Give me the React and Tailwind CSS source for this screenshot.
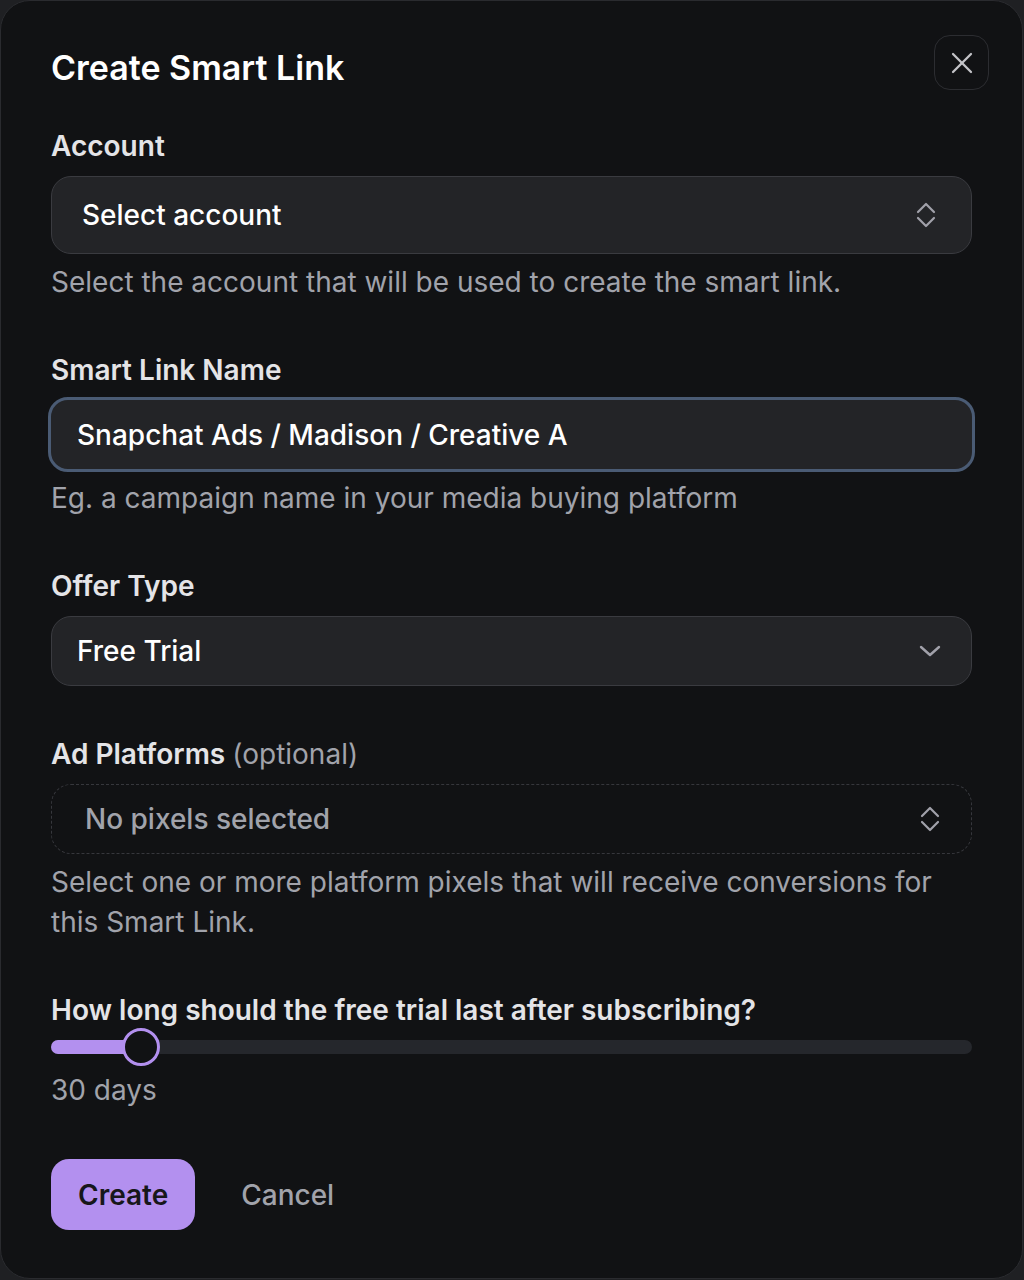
import { X } from "lucide-react";

const Label = ({ children }) => (
  <div className="text-[28px] font-semibold leading-[32px] text-[#e4e4e7]">{children}</div>
);

const Help = ({ children }) => (
  <p className="text-[28px] leading-[40px] text-[#a1a3ab]">{children}</p>
);

const UpDown = () => (
  <svg width="20" height="26" viewBox="0 0 20 26" fill="none" stroke="#a1a1aa" strokeWidth="2.2" strokeLinecap="round" strokeLinejoin="round">
    <path d="M2 10 L10 2 L18 10" />
    <path d="M2 16 L10 24 L18 16" />
  </svg>
);

const Down = () => (
  <svg width="22" height="12" viewBox="0 0 22 12" fill="none" stroke="#a1a1aa" strokeWidth="2.4" strokeLinecap="round" strokeLinejoin="round">
    <path d="M2 2 L11 10 L20 2" />
  </svg>
);

export default function App() {
  return (
    <div
      className="h-[1280px] w-[1024px] bg-[#1f2023]"
      style={{ fontFamily: "Inter, 'Noto Sans', sans-serif" }}
    >
      <div className="h-[1279px] w-[1023px] rounded-[30px] border border-[#2a2b2f] bg-[#111214] px-[50px] pt-[34px]">
        <div className="flex items-start justify-between">
          <h1 className="pt-[12px] text-[34px] font-semibold leading-[42px] text-white">Create Smart Link</h1>
          <button className="-mr-[17px] flex h-[55px] w-[55px] items-center justify-center rounded-[16px] border border-[#2c2d31] text-[#c4c4c8]">
            <X size={36} strokeWidth={1.5} />
          </button>
        </div>

        <div className="mt-[40px]">
          <Label>Account</Label>
          <div className="mt-[14px] flex h-[78px] items-center justify-between rounded-[20px] border border-[#3a3b40] bg-[#232427] pl-[30px] pr-[35px]">
            <span className="text-[28px] font-medium text-white">Select account</span>
            <UpDown />
          </div>
          <div className="mt-[8px]">
            <Help>Select the account that will be used to create the smart link.</Help>
          </div>
        </div>

        <div className="mt-[52px]">
          <Label>Smart Link Name</Label>
          <div className="-mx-[3px] mt-[11px] flex h-[75px] items-center rounded-[20px] border-[3px] border-[#4a5b74] bg-[#232427] pl-[26px]">
            <span className="text-[28px] font-medium text-white">Snapchat Ads / Madison / Creative A</span>
          </div>
          <div className="mt-[6px]">
            <Help>Eg. a campaign name in your media buying platform</Help>
          </div>
        </div>

        <div className="mt-[52px]">
          <Label>Offer Type</Label>
          <div className="mt-[14px] flex h-[70px] items-center justify-between rounded-[20px] border border-[#3a3b40] bg-[#232427] pl-[25px] pr-[30px]">
            <span className="text-[28px] font-medium text-white">Free Trial</span>
            <Down />
          </div>
        </div>

        <div className="mt-[52px]">
          <Label>
            Ad Platforms <span className="font-normal text-[#a1a3ab]">(optional)</span>
          </Label>
          <div className="mt-[14px] flex h-[70px] items-center justify-between rounded-[20px] border border-dashed border-[#36373c] pl-[33px] pr-[31px]">
            <span className="text-[28px] font-medium text-[#a1a3ab]">No pixels selected</span>
            <UpDown />
          </div>
          <div className="mt-[8px]">
            <Help>Select one or more platform pixels that will receive conversions for this Smart Link.</Help>
          </div>
        </div>

        <div className="mt-[52px]">
          <Label>How long should the free trial last after subscribing?</Label>
          <div className="relative mt-[2px] h-[38px]">
            <div className="absolute left-0 right-0 top-[12px] h-[14px] rounded-full bg-[#25272c]" />
            <div className="absolute left-0 top-[12px] h-[14px] w-[92px] rounded-full bg-[#b390ef]" />
            <div className="absolute left-[71px] top-0 h-[38px] w-[38px] rounded-full border-[3px] border-[#b390ef] bg-[#111214]" />
          </div>
          <div className="mt-[4px] text-[28px] leading-[40px] text-[#a1a3ab]">30 days</div>
        </div>

        <div className="mt-[49px] flex items-center gap-[46px]">
          <button className="h-[71px] rounded-[18px] bg-[#b390ef] px-[27px] text-[28px] font-semibold text-[#17171a]">
            Create
          </button>
          <button className="text-[28px] font-medium text-[#a1a3ab]">Cancel</button>
        </div>
      </div>
    </div>
  );
}
